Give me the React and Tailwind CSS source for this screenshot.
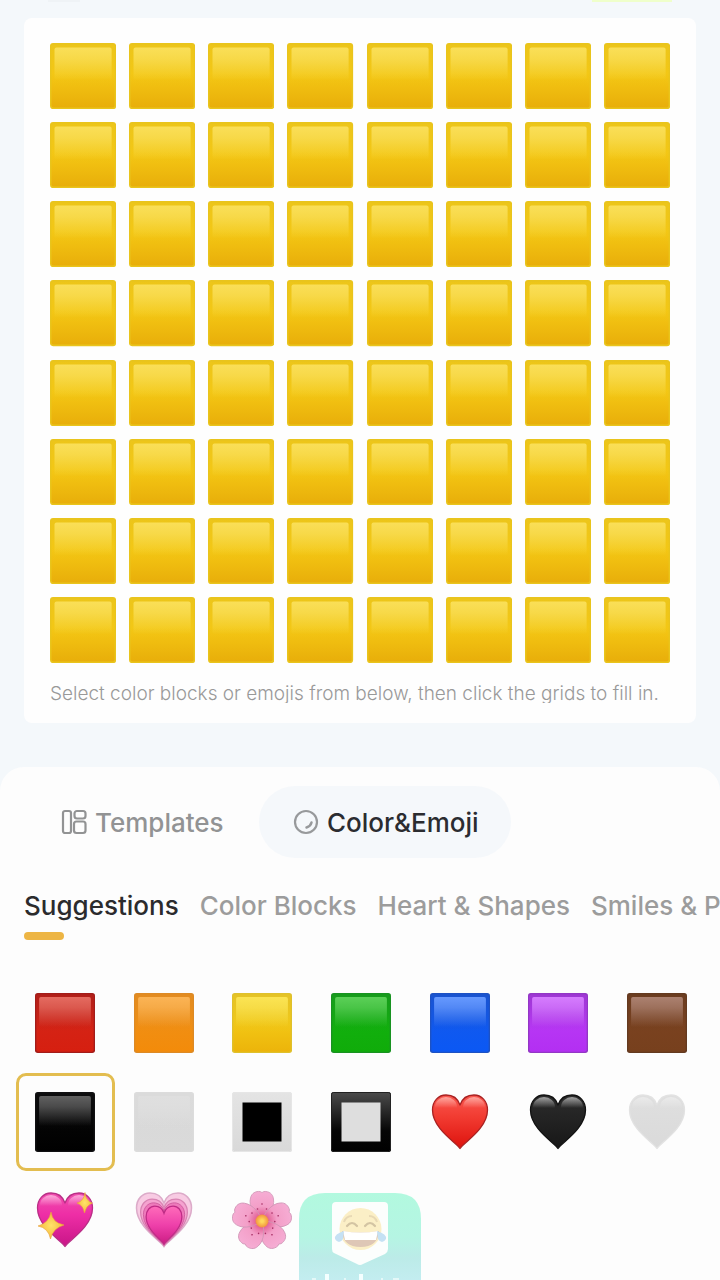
import { useState } from 'react';

const TILE_COLORS = {
  canvas: { base: '#f5c814', end: '#e8ae0a', edge: '#e9c41c', shine: '#fadf58' },
  red: { base: '#d42416', end: '#d61f10', edge: '#a31d1a', shine: '#e56b60' },
  orange: { base: '#f08f14', end: '#f38b0a', edge: '#dd8a25', shine: '#fbb455' },
  yellow: { base: '#f3c916', end: '#ecb40a', edge: '#dfc02c', shine: '#fbe453' },
  green: { base: '#12b00e', end: '#10ac0a', edge: '#199321', shine: '#5bd057' },
  blue: { base: '#1159ee', end: '#0b58f4', edge: '#1d52c4', shine: '#6699ff' },
  purple: { base: '#b838f5', end: '#b32ff2', edge: '#9337c5', shine: '#d67cff' },
  brown: { base: '#7a4220', end: '#77401d', edge: '#643a20', shine: '#ac8170' },
  black: { base: '#050505', end: '#000000', edge: '#101012', shine: '#606060' },
  white: { base: '#d9d9d9', end: '#dadada', edge: '#dcdcdc', shine: '#dfdfdf' },
};

function Tile({ color }) {
  const c = TILE_COLORS[color];
  const id = `tile-${color}`;
  return (
    <svg viewBox="0 0 66 66" className="block w-full" aria-hidden="true">
      <defs>
        <linearGradient id={`${id}-body`} x1="0" y1="0" x2="0" y2="1">
          <stop offset="0.45" stopColor={c.base} />
          <stop offset="1" stopColor={c.end} />
        </linearGradient>
        <linearGradient id={`${id}-shine`} x1="0" y1="0" x2="0" y2="1">
          <stop offset="0" stopColor={c.shine} />
          <stop offset="0.35" stopColor={c.shine} stopOpacity="0.75" />
          <stop offset="1" stopColor={c.shine} stopOpacity="0" />
        </linearGradient>
        <linearGradient id={`${id}-edge`} x1="0" y1="0" x2="0" y2="1">
          <stop offset="0" stopColor={c.edge} stopOpacity="0.7" />
          <stop offset="1" stopColor={c.edge} stopOpacity="0" />
        </linearGradient>
      </defs>
      <rect width="66" height="66" rx="3" fill={c.edge} />
      <rect x="1.5" y="2" width="63" height="62.5" rx="2" fill={`url(#${id}-body)`} />
      <rect x="1.5" y="2" width="63" height="40" rx="2" fill={`url(#${id}-edge)`} />
      <rect x="4.500" y="4.500" width="57" height="33" rx="2" fill={`url(#${id}-shine)`} />
    </svg>
  );
}

function FramedTile({ dark }) {
  const id = dark ? 'frame-dark' : 'frame-light';
  return (
    <svg viewBox="0 0 60 60" className="block w-full" aria-hidden="true">
      <defs>
        <linearGradient id={id} x1="0" y1="0" x2="0" y2="1">
          <stop offset="0" stopColor={dark ? '#4c4c4c' : '#e4e4e4'} />
          <stop offset="0.65" stopColor={dark ? '#050505' : '#dddddd'} />
          <stop offset="1" stopColor={dark ? '#000000' : '#d9d9d9'} />
        </linearGradient>
      </defs>
      <rect width="60" height="60" rx="2.500" fill={`url(#${id})`} />
      <rect x="0.500" y="0.500" width="59" height="59" rx="2" fill="none" stroke={dark ? '#222222' : '#e6e6e6'} />
      <rect x="10.500" y="10.500" width="39" height="39" fill={dark ? '#dedede' : '#000000'} />
    </svg>
  );
}

const HEART =
  'M30 56.500C27 51 2.500 37 2.500 18C2.500 9 8.500 3 16 3C23 3 28 7 30 13C32 7 37 3 44 3C51.500 3 57.500 9 57.500 18C57.500 37 33 51 30 56.500Z';

const HEART_COLORS = {
  red: { top: '#f9574f', mid: '#f23c32', end: '#dd120d', edge: '#a92222', shine: '#ffb0a8' },
  black: { top: '#2c2c2c', mid: '#242424', end: '#171717', edge: '#121212', shine: '#b0b0b0' },
  white: { top: '#dfdfdf', mid: '#dddddd', end: '#dadada', edge: '#e2e2e2', shine: '#ececec' },
  pink: { top: '#f04fae', mid: '#ee2ea6', end: '#c81587', edge: '#b92f86', shine: '#ffb3df' },
};

function Heart({ color, children }) {
  const c = HEART_COLORS[color];
  const id = `heart-${color}`;
  return (
    <svg viewBox="0 0 60 60" className="block w-full overflow-visible" aria-hidden="true">
      <defs>
        <linearGradient id={id} x1="0" y1="0" x2="0" y2="1">
          <stop offset="0" stopColor={c.top} />
          <stop offset="0.4" stopColor={c.mid} />
          <stop offset="1" stopColor={c.end} />
        </linearGradient>
        <linearGradient id={`${id}-shine`} gradientUnits="userSpaceOnUse" x1="0" y1="5" x2="0" y2="16">
          <stop offset="0" stopColor={c.shine} stopOpacity="0.9" />
          <stop offset="1" stopColor={c.shine} stopOpacity="0" />
        </linearGradient>
      </defs>
      <path d={HEART} fill={`url(#${id})`} stroke={c.edge} strokeWidth="1.300" strokeLinejoin="round" />
      <ellipse cx="16" cy="15" rx="11" ry="10" fill={`url(#${id}-shine)`} />
      <ellipse cx="44" cy="15" rx="11" ry="10" fill={`url(#${id}-shine)`} />
      {children}
    </svg>
  );
}

function SparklingHeart() {
  return (
    <Heart color="pink">
      <defs>
        <radialGradient id="spark">
          <stop offset="0" stopColor="#ffe36a" />
          <stop offset="1" stopColor="#f5b83d" />
        </radialGradient>
      </defs>
      <path d="M16 22Q17.500 33 29 35Q18 38 15.500 49Q13.500 38 3 36Q14 33 16 22Z" fill="url(#spark)" stroke="#e7a23c" strokeWidth="0.600" />
      <path d="M50 2.500Q50.500 11 57.500 13Q51.500 15 49.500 23Q48 15 42 13Q49 11 50 2.500Z" fill="url(#spark)" stroke="#e7a23c" strokeWidth="0.600" />
    </Heart>
  );
}

function GrowingHeart() {
  return (
    <svg viewBox="0 0 60 60" className="block w-full" aria-hidden="true">
      <defs>
        <linearGradient id="growing" x1="0" y1="0" x2="0" y2="1">
          <stop offset="0" stopColor="#ff6cba" />
          <stop offset="0.5" stopColor="#ee40aa" />
          <stop offset="1" stopColor="#cc1c84" />
        </linearGradient>
      </defs>
      <path d={HEART} fill="#f8cbe3" stroke="#dcabc9" strokeWidth="1.500" />
      <path d={HEART} transform="translate(4.500 6.500) scale(.85 .87)" fill="#f5a3d0" stroke="#d884b3" strokeWidth="1.500" />
      <path d={HEART} transform="translate(7.500 10.500) scale(.75 .79)" fill="#ee7abb" stroke="#cf5d9e" strokeWidth="1.200" />
      <path d={HEART} transform="translate(10.500 14) scale(.65 .71)" fill="url(#growing)" stroke="#bf2c86" strokeWidth="2" />
    </svg>
  );
}

function Blossom() {
  const petals = [0, 72, 144, 216, 288];
  return (
    <svg viewBox="0 0 60 60" className="block w-full" aria-hidden="true">
      <defs>
        <radialGradient id="petal" gradientUnits="userSpaceOnUse" cx="30" cy="31" r="31">
          <stop offset="0.15" stopColor="#e0588f" />
          <stop offset="0.48" stopColor="#f39fc8" />
          <stop offset="1" stopColor="#f6aed5" />
        </radialGradient>
        <radialGradient id="pollen">
          <stop offset="0.2" stopColor="#ffd85c" />
          <stop offset="1" stopColor="#f2933f" />
        </radialGradient>
      </defs>
      {petals.map((angle) => (
        <g key={angle} transform={`rotate(${angle} 30 31)`}>
          <path
            d="M30 31C24 27 16 17 18.500 8C19.500 3 24 1 28 1.500Q30 3.500 32 1.500C37 1 41 4 41.500 9C43 18 36 27 30 31Z"
            fill="url(#petal)"
            stroke="#cf95b5"
            strokeWidth="0.800"
          />
          <circle cx="30" cy="14" r="0.800" fill="#a52d63" />
          <circle cx="25.500" cy="19" r="0.800" fill="#a52d63" />
          <circle cx="34.500" cy="19" r="0.800" fill="#a52d63" />
        </g>
      ))}
      <circle cx="30" cy="31" r="6.500" fill="url(#pollen)" />
    </svg>
  );
}

function TemplatesIcon() {
  return (
    <svg viewBox="0 0 26 26" className="size-[26px]" fill="none" stroke="currentColor" strokeWidth="2.200" aria-hidden="true">
      <rect x="2" y="2" width="8" height="22" rx="2" />
      <rect x="13.500" y="2" width="11" height="7.500" rx="2.500" />
      <rect x="13" y="12.500" width="11.500" height="11.500" rx="2.500" />
    </svg>
  );
}

function PaletteIcon() {
  return (
    <svg viewBox="0 0 26 26" className="size-[26px]" fill="none" stroke="currentColor" strokeWidth="2.200" strokeLinecap="round" aria-hidden="true">
      <circle cx="13" cy="13" r="11" />
      <path d="M18.500 13.500Q17.500 17.500 13.500 18.500" strokeWidth="2.500" />
    </svg>
  );
}

function AppBadge() {
  return (
    <svg viewBox="0 0 122 87" className="block w-full" aria-hidden="true">
      <defs>
        <linearGradient id="badge" x1="0" y1="0" x2="0" y2="1">
          <stop offset="0" stopColor="#b2f9df" />
          <stop offset="0.5" stopColor="#b5f5e3" />
          <stop offset="0.75" stopColor="#bcebe8" />
          <stop offset="1" stopColor="#c3edf0" />
        </linearGradient>
      </defs>
      <path d="M0 87V26Q0 0 26 0H96Q122 0 122 26V87Z" fill="url(#badge)" />
      <path d="M37 9H85Q89 9 89 13V56Q89 59 86 61L64 71Q61 73 58 71L35 60Q33 59 33 56V13Q33 9 37 9Z" fill="#fcfefd" />
      <circle cx="61.500" cy="36" r="21" fill="#fbefc6" />
      <path d="M45 29Q47 23 53 23M70 23Q76 23 78 29" stroke="#e8d9b5" strokeWidth="2" fill="none" />
      <path d="M48 33Q53 27 58 33M66 33Q71 27 76 33" stroke="#d3c4a3" strokeWidth="2.200" fill="none" strokeLinecap="round" />
      <path d="M43 38Q61.500 41 80 38Q79 54 61.500 54Q44 54 43 38Z" fill="#dec7b6" />
      <path d="M44 38Q61.500 41 79 38L77 47H46Z" fill="#ffffff" />
      <path d="M45 38Q35 41 36 46Q40 52 44 46ZM78 38Q88 41 87 46Q83 52 79 46Z" fill="#c5e1f4" />
      <path d="M28 81V87M62 81V87" stroke="#f4ffff" strokeWidth="4" />
      <path d="M13 86H17M45 86H47M82 86H84M94 86H100" stroke="#e4f8f8" strokeWidth="2" />
    </svg>
  );
}

const PALETTE = [
  { name: 'Red square', art: <Tile color="red" /> },
  { name: 'Orange square', art: <Tile color="orange" /> },
  { name: 'Yellow square', art: <Tile color="yellow" /> },
  { name: 'Green square', art: <Tile color="green" /> },
  { name: 'Blue square', art: <Tile color="blue" /> },
  { name: 'Purple square', art: <Tile color="purple" /> },
  { name: 'Brown square', art: <Tile color="brown" /> },
  { name: 'Black square', art: <Tile color="black" /> },
  { name: 'White square', art: <Tile color="white" /> },
  { name: 'White square button', art: <FramedTile /> },
  { name: 'Black square button', art: <FramedTile dark /> },
  { name: 'Red heart', art: <Heart color="red" /> },
  { name: 'Black heart', art: <Heart color="black" /> },
  { name: 'White heart', art: <Heart color="white" /> },
  { name: 'Sparkling heart', art: <SparklingHeart /> },
  { name: 'Growing heart', art: <GrowingHeart /> },
  { name: 'Cherry blossom', art: <Blossom /> },
];

const CATEGORIES = ['Suggestions', 'Color Blocks', 'Heart & Shapes', 'Smiles & People'];

export default function App() {
  const [cells, setCells] = useState(() => Array(64).fill(null));
  const [selected, setSelected] = useState(7);
  const [category, setCategory] = useState(0);

  const fill = (index) => setCells(cells.map((cell, i) => (i === index ? selected : cell)));

  return (
    <div className="relative flex min-h-screen flex-col overflow-hidden bg-[#f4f8fb] font-['Inter','Liberation_Sans',sans-serif]">
      <header className="flex h-[18px] items-start justify-between px-12">
        <div className="h-0.5 w-8 bg-[#eff3f6]" />
        <div className="h-0.5 w-20 bg-[#efffcb]" />
      </header>

      <main className="mx-6 rounded-lg bg-[#fefefe] px-[26px] pt-[25px] pb-5">
        <div className="grid grid-cols-8 gap-[13px]">
          {cells.map((cell, i) => (
            <button key={i} type="button" aria-label={`Cell ${i + 1}`} onClick={() => fill(i)} className="block">
              {cell === null ? <Tile color="canvas" /> : PALETTE[cell].art}
            </button>
          ))}
        </div>
        <p className="mt-5 h-5 overflow-hidden text-[19px] leading-[22px] font-light whitespace-nowrap text-[#999999]">
          Select color blocks or emojis from below, then click the grids to fill in.
        </p>
      </main>

      <section className="mt-11 flex-1 rounded-t-3xl bg-[#fdfdfd] pt-[19px]">
        <div className="flex h-[72px] px-6 text-[26px] font-medium">
          <button type="button" className="flex w-[235px] items-center gap-2 pl-[37px] text-[#929394]">
            <TemplatesIcon />
            Templates
          </button>
          <button type="button" className="flex items-center gap-2 rounded-full bg-[#f5f8fb] pr-8 pl-[34px] text-[#2b2c30]">
            <span className="text-[#97999b]">
              <PaletteIcon />
            </span>
            Color&amp;Emoji
          </button>
        </div>

        <nav className="mt-8 flex gap-[21px] overflow-hidden pl-6 text-[26px] leading-8 font-medium whitespace-nowrap">
          {CATEGORIES.map((label, i) => (
            <button
              key={label}
              type="button"
              onClick={() => setCategory(i)}
              className={i === category ? 'shrink-0 text-left text-[#2b2b2d]' : 'shrink-0 text-left text-[#9c9c9c]'}
            >
              {label}
              <span className={i === category ? 'mt-[10px] block h-2 w-10 rounded-full bg-[#edb544]' : 'mt-[10px] block h-2'} />
            </button>
          ))}
        </nav>

        <div className="mt-[34px] grid grid-cols-7 pr-[14px] pl-4">
          {PALETTE.map((item, i) => (
            <button
              key={item.name}
              type="button"
              aria-label={item.name}
              onClick={() => setSelected(i)}
              className={
                i === selected
                  ? 'flex aspect-square items-center justify-center rounded-[10px] border-3 border-[#e3bd50]'
                  : 'flex aspect-square items-center justify-center'
              }
            >
              <span className="block w-[60px]">{item.art}</span>
            </button>
          ))}
        </div>
      </section>

      <div className="absolute bottom-0 left-1/2 w-[122px] -translate-x-1/2">
        <AppBadge />
      </div>
    </div>
  );
}
